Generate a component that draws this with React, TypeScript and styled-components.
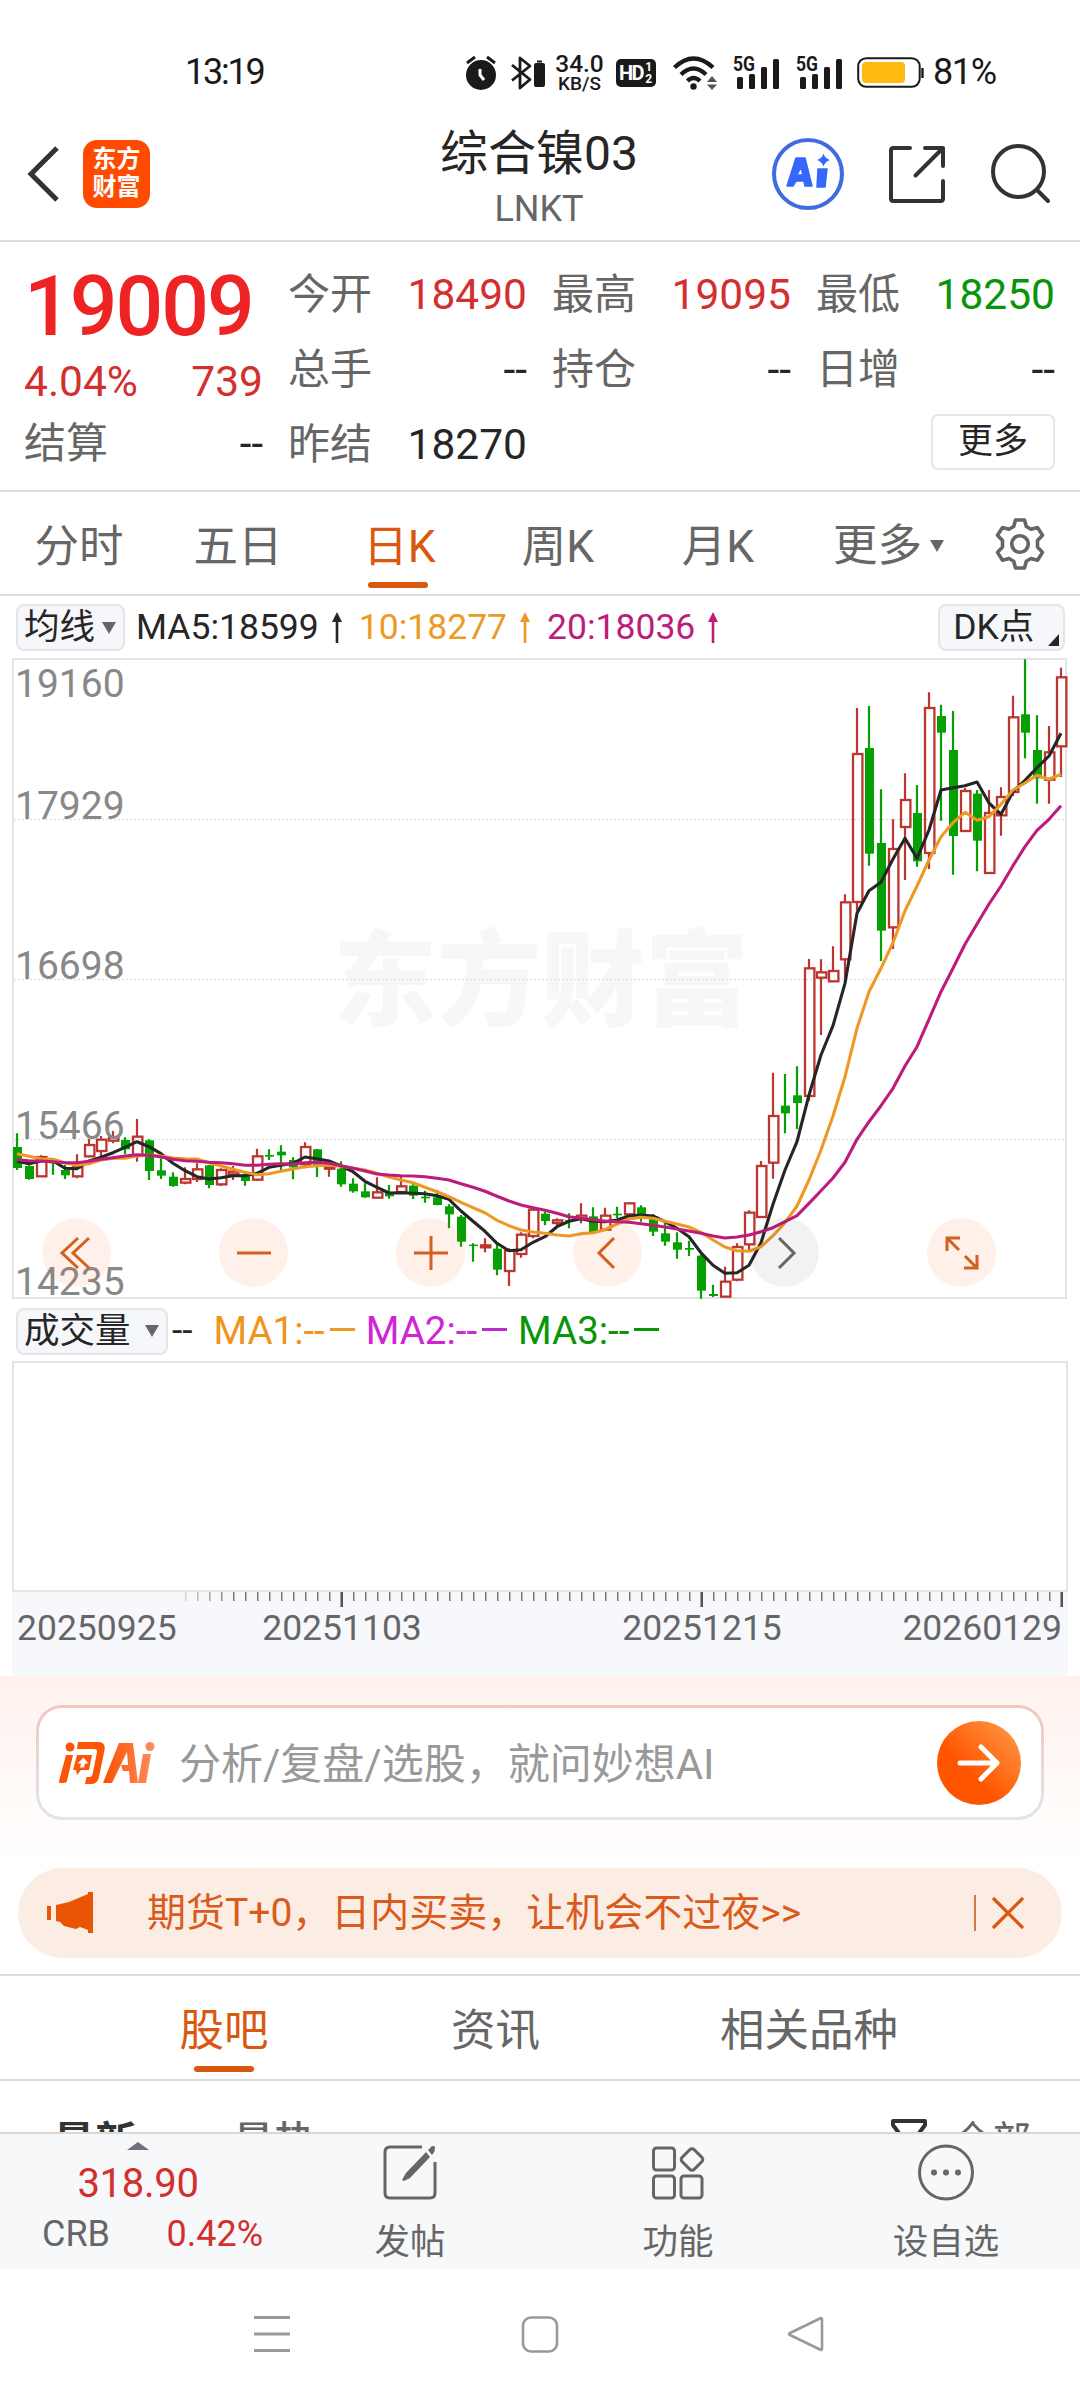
import React from "react";
import styled, { createGlobalStyle } from "styled-components";

const ORANGE = "#d9580f";
const RED = "#d32f2f";
const GREEN = "#0a940a";
const GRAY = "#666";
const INK = "#262626";
const LINE = "#dcdcdc";

const Global = createGlobalStyle`
  body { margin: 0; background: #fff; }
  * { box-sizing: border-box; }
  svg { display: block; flex: none; }
`;

const Screen = styled.div`
  width: 1080px;
  height: 2400px;
  overflow: hidden;
  display: flex;
  flex-direction: column;
  background: #fff;
  font-family: Roboto, "Noto Sans CJK SC", sans-serif;
  color: ${INK};
`;

const Text = styled.span<{ $size: number; $color?: string; $weight?: number }>`
  font-size: ${(p) => p.$size}px;
  line-height: ${(p) => Math.round(p.$size * 1.2)}px;
  color: ${(p) => p.$color || INK};
  font-weight: ${(p) => p.$weight || 400};
  white-space: nowrap;
`;

/* ---------- status bar ---------- */
const StatusBar = styled.div`
  height: 108px;
  flex: none;
  padding: 37px 0 0 185px;
  display: flex;
  align-items: center;
`;
const Clock = styled(Text)`
  width: 280px;
  letter-spacing: -2.2px;
`;
const Percent = styled(Text)`
  letter-spacing: -1.4px;
`;
const StatusIcons = styled.div`
  display: flex;
  align-items: center;
`;
const Speed = styled.div`
  width: 49px;
  margin-left: 9px;
  display: flex;
  flex-direction: column;
  align-items: center;
  font-weight: 500;
  color: #1a1a1a;
`;
const SpeedNum = styled.span`
  font-size: 24.5px;
  line-height: 23px;
`;
const SpeedUnit = styled.span`
  font-size: 19px;
  line-height: 18px;
`;
const HdBadge = styled.div`
  width: 40px;
  height: 28px;
  margin-left: 12px;
  border-radius: 5px;
  background: #1a1a1a;
  color: #fff;
  display: flex;
  align-items: center;
  padding-left: 3px;
  font-size: 20px;
  font-weight: 700;
  letter-spacing: -1.5px;
`;
const HdDigits = styled.span`
  display: flex;
  flex-direction: column;
  font-size: 12px;
  line-height: 12px;
  margin-left: 2px;
`;
const Signal = styled.svg`
  margin-left: 15px;
`;

/* ---------- header ---------- */
const Header = styled.header`
  height: 134px;
  flex: none;
  border-bottom: 2px solid ${LINE};
  display: grid;
  grid-template-columns: 1fr 260px 1fr;
`;
const HeaderLeft = styled.div`
  display: flex;
  align-items: center;
  padding-left: 26px;
`;
const AppLogo = styled.div`
  width: 67px;
  height: 68px;
  margin-left: 23px;
  border-radius: 14px;
  background: #ff4a00;
  color: #fff;
  font-weight: 700;
  font-size: 24px;
  line-height: 28px;
  display: flex;
  flex-direction: column;
  align-items: center;
  justify-content: center;
  padding-bottom: 2px;
`;
const HeaderTitle = styled.div`
  display: flex;
  flex-direction: column;
  align-items: center;
  padding: 17px 2px 0 0;
`;
const Ticker = styled(Text)`
  margin-top: 5px;
`;
const HeaderRight = styled.div`
  display: flex;
  align-items: center;
  justify-content: flex-end;
  padding-right: 28px;
`;

/* ---------- quote ---------- */
const Quote = styled.section`
  height: 250px;
  flex: none;
  border-bottom: 2px solid ${LINE};
  padding: 15px 24px 0;
  display: grid;
  grid-template-columns: repeat(4, 239px);
  column-gap: 25px;
`;
const QuoteCol = styled.div`
  display: flex;
  flex-direction: column;
`;
const Pair = styled.div<{ $h?: number }>`
  height: ${(p) => p.$h || 75}px;
  display: flex;
  justify-content: space-between;
  align-items: center;
`;
const Price = styled.div`
  height: 100px;
  padding: 0;
  font-size: 84px;
  line-height: 100px;
  font-weight: 500;
  letter-spacing: -2px;
  color: #ee2424;
`;
const MoreButton = styled.button`
  width: 124px;
  height: 56px;
  margin: 7px 0 0 auto;
  padding: 0;
  border: 2px solid #e6e6e6;
  border-radius: 7px;
  background: #fff;
  font: 400 35px/50px Roboto, "Noto Sans CJK SC", sans-serif;
  color: ${INK};
`;

/* ---------- period tabs ---------- */
const PeriodTabs = styled.nav`
  height: 104px;
  flex: none;
  border-bottom: 2px solid ${LINE};
  display: flex;
`;
const Tab = styled.div<{ $active?: boolean; $w: number }>`
  width: ${(p) => p.$w}px;
  display: flex;
  flex-direction: column;
  align-items: center;
  padding-top: 27px;
  font-size: 44.5px;
  line-height: 56px;
  white-space: nowrap;
  color: ${(p) => (p.$active ? ORANGE : GRAY)};
`;
const TabLine = styled.i`
  width: 60px;
  height: 6px;
  border-radius: 3px;
  margin: 7px 4px 0 0;
  background: ${ORANGE};
`;
const CommunityTab = styled(Tab)`
  ${TabLine} {
    margin-right: 0;
  }
`;
const MoreTab = styled.div`
  width: 193px;
  padding: 0 0 0 32px;
  display: flex;
  align-items: center;
  gap: 8px;
  height: 108px;
`;

/* ---------- indicator rows ---------- */
const Row = styled.div<{ $h: number }>`
  height: ${(p) => p.$h}px;
  flex: none;
  display: flex;
  align-items: center;
  padding: 1px 15px 0 16px;
`;
const Chip = styled.div<{ $w: number; $pr?: number }>`
  width: ${(p) => p.$w}px;
  height: 47px;
  flex: none;
  padding: 0 ${(p) => p.$pr ?? 7}px 0 6px;
  border: 2px solid #e3e5e8;
  border-radius: 8px;
  background: #f6f7fa;
  display: flex;
  align-items: center;
  justify-content: space-between;
`;
const Ma = styled.div<{ $ml: number }>`
  display: flex;
  align-items: center;
  margin-left: ${(p) => p.$ml}px;
`;
const Arrow = styled.svg`
  margin-left: 12px;
`;
const Spacer = styled.div`
  flex: 1;
`;
const Dash = styled.i<{ $color: string }>`
  width: 25px;
  height: 3px;
  margin: 0 0 3px 5px;
  background: ${(p) => p.$color};
`;

/* ---------- chart ---------- */
const ChartArea = styled.div`
  position: relative;
  height: 642px;
  flex: none;
`;
const ChartTools = styled.div`
  position: absolute;
  left: 42px;
  top: 560px;
  display: flex;
  gap: 109px;
`;
const Tool = styled.button<{ $muted?: boolean }>`
  width: 69px;
  height: 69px;
  margin-right: -1px;
  padding: 0;
  border: 0;
  border-radius: 50%;
  display: grid;
  place-items: center;
  background: ${(p) => (p.$muted ? "rgba(0,0,0,.05)" : "rgba(255,96,20,.09)")};
`;
const VolumeBox = styled.div`
  height: 231px;
  flex: none;
  margin: 0 12px;
  border: 2px solid #e4e4e4;
`;
const AxisBox = styled.div`
  height: 84px;
  flex: none;
  margin: 0 12px;
  background: #f7f8fb;
`;

/* ---------- AI question ---------- */
const AskPanel = styled.section`
  height: 192px;
  flex: none;
  padding: 29px 36px 0;
  background: linear-gradient(#fff2ee, #fffaf8 60%, #fff);
`;
const AskBox = styled.div`
  height: 115px;
  border-radius: 26px;
  border: 3px solid transparent;
  background: linear-gradient(#fff, #fff) padding-box,
    linear-gradient(#f1c8c0, #dfe6ef) border-box;
  display: flex;
  align-items: center;
  padding: 0 20px;
`;
const Placeholder = styled(Text)`
  flex: 1;
  margin-left: 23px;
  padding-top: 5px;
`;
const SendButton = styled.button`
  width: 84px;
  height: 84px;
  padding: 0;
  border: 0;
  border-radius: 50%;
  background: linear-gradient(225deg, #ff9340 10%, #ff5500 62%);
  display: grid;
  place-items: center;
`;

/* ---------- notice ---------- */
const Notice = styled.div`
  height: 90px;
  flex: none;
  margin: 0 18px 16px;
  padding: 0 37px 0 29px;
  border-radius: 45px;
  background: #fcede4;
  display: flex;
  align-items: center;
`;
const NoticeText = styled(Text)`
  flex: 1;
  margin-left: 53px;
`;
const Divider = styled.i`
  width: 2px;
  height: 36px;
  margin-right: 15px;
  background: #cf7a4a;
`;

/* ---------- community ---------- */
const CommunityTabs = styled.nav`
  height: 107px;
  flex: none;
  border-top: 2px solid ${LINE};
  border-bottom: 2px solid ${LINE};
  padding-left: 88px;
  display: flex;
`;
const Feed = styled.div`
  height: 51px;
  flex: none;
  overflow: hidden;
  display: flex;
  padding: 37px 49px 0 53px;
`;
const FeedItem = styled(Text)<{ $ml?: number }>`
  margin-left: ${(p) => p.$ml || 0}px;
`;

/* ---------- bottom ---------- */
const BottomBar = styled.footer`
  height: 137px;
  flex: none;
  border-top: 2px solid #d8d8d8;
  background: #f7f8fa;
  display: grid;
  grid-template-columns: 276px 268px 268px 268px;
`;
const IndexCell = styled.div`
  display: flex;
  flex-direction: column;
  align-items: center;
  padding-top: 8px;
`;
const IndexValue = styled(Text)`
  margin-top: 10px;
  letter-spacing: -0.3px;
`;
const IndexRow = styled.div`
  width: 276px;
  padding: 5px 13px 0 42px;
  display: flex;
  justify-content: space-between;
`;
const Action = styled.div`
  display: flex;
  flex-direction: column;
  align-items: center;
  padding-top: 9px;
  gap: 20px;
`;
const SystemNav = styled.div`
  height: 132px;
  flex: none;
  display: flex;
  align-items: center;
  padding: 0 0 2px 252px;
  gap: 227px;
`;

/* ---------- data ---------- */
type Candle = ["r" | "g", number, number, number, number];

// [colour, high, body top, body bottom, low], one third of a pixel each
const calm: Candle[] = [
  ["g", 160, 201, 264, 270], ["g", 256, 258, 297, 299], ["r", 226, 231, 289, 290], ["g", 236, 244, 250, 284],
  ["g", 255, 270, 286, 297], ["r", 223, 262, 289, 295], ["r", 176, 195, 229, 232], ["r", 168, 179, 213, 228],
  ["r", 153, 172, 182, 190], ["g", 172, 180, 208, 222], ["r", 117, 170, 226, 245], ["g", 178, 181, 273, 300],
  ["g", 235, 271, 287, 297], ["g", 277, 290, 318, 320], ["r", 262, 297, 308, 313], ["r", 250, 268, 297, 306],
  ["g", 255, 256, 315, 325], ["r", 265, 270, 313, 318], ["r", 258, 275, 283, 300], ["g", 275, 283, 303, 317],
  ["r", 206, 229, 299, 302], ["g", 208, 225, 230, 240], ["g", 196, 215, 226, 272], ["g", 232, 240, 262, 298],
  ["r", 187, 201, 253, 265], ["g", 207, 208, 255, 291], ["r", 255, 262, 266, 290], ["g", 244, 266, 313, 320],
  ["g", 295, 311, 334, 338], ["g", 310, 334, 352, 353], ["r", 292, 337, 353, 355], ["g", 315, 338, 349, 356],
  ["r", 290, 319, 336, 340], ["g", 313, 317, 347, 357], ["g", 332, 350, 355, 368], ["g", 330, 352, 375, 376],
  ["g", 373, 379, 403, 445], ["g", 405, 410, 485, 500], ["g", 490, 494, 498, 545], ["r", 475, 496, 502, 517],
  ["g", 490, 506, 569, 586], ["r", 505, 512, 573, 618], ["r", 457, 464, 522, 533], ["r", 388, 389, 468, 475],
  ["g", 395, 401, 423, 436], ["r", 415, 421, 429, 438], ["g", 400, 420, 425, 445], ["r", 370, 407, 416, 430],
  ["g", 382, 409, 457, 460], ["r", 383, 407, 449, 452], ["g", 380, 401, 406, 415], ["r", 368, 370, 403, 404],
  ["g", 376, 382, 403, 425], ["g", 402, 410, 455, 468], ["g", 430, 460, 485, 497], ["g", 457, 487, 509, 536],
  ["g", 482, 504, 509, 528], ["g", 522, 527, 632, 656], ["g", 614, 642, 648, 651], ["r", 560, 605, 650, 652],
  ["r", 490, 501, 599, 604], ["r", 391, 398, 493, 510], ["r", 243, 258, 411, 413], ["r", -22, 108, 248, 296],
  ["g", -18, 77, 100, 160], ["g", -41, 46, 69, 147],
];
const rally: Candle[] = [
  ["r", 927, 955, 1338, 1352], ["r", 928, 967, 983, 1155], ["r", 889, 963, 994, 995], ["r", 733, 757, 928, 985],
  ["r", 174, 312, 756, 782], ["g", 168, 294, 611, 647], ["g", 418, 579, 842, 933], ["r", 508, 597, 832, 897],
  ["r", 370, 450, 531, 690], ["g", 405, 489, 634, 650], ["r", 127, 174, 609, 657], ["g", 164, 198, 248, 512],
  ["g", 183, 300, 558, 674], ["r", 414, 423, 543, 546], ["g", 420, 431, 572, 664], ["r", 420, 489, 669, 669],
  ["r", 412, 441, 496, 557], ["r", 137, 202, 426, 438], ["g", 28, 193, 248, 325], ["g", 196, 300, 385, 461],
  ["r", 228, 307, 389, 461], ["r", 53, 82, 289, 381],
];
const CALM_BASE = 1266;
const RALLY_BASE = -24;
const px = (i: number) => 17 + 12 * i;

const ma5a = [244, 251, 243, 243, 265, 266, 243, 232, 218, 202, 185, 200, 221, 250, 272, 290, 297, 293, 287, 287, 280, 262, 256, 250, 231, 236, 243, 258, 275, 304, 322, 339, 338, 340, 341, 347, 358, 393, 424, 454, 490, 512, 509, 487, 470, 440, 424, 416, 424, 425, 420, 408, 405, 408, 425, 445, 470, 518, 556, 580, 578, 556, 488, 373, 270, 185];
const ma5b = [1335, 1215, 1127, 1000, 790, 722, 697, 627, 565, 625, 540, 420, 413, 407, 396, 459, 493, 425, 391, 353, 318, 250];
const ma10a = [221, 229, 236, 238, 248, 256, 251, 240, 235, 235, 228, 225, 228, 234, 236, 237, 248, 258, 268, 277, 284, 281, 274, 267, 260, 257, 256, 259, 264, 270, 280, 291, 300, 308, 322, 335, 350, 367, 383, 398, 421, 437, 450, 456, 460, 465, 468, 461, 458, 449, 432, 417, 412, 415, 424, 432, 441, 457, 480, 501, 512, 514, 500, 467, 428, 378, 300, 210, 108, -10];
const ma10b = [1135, 1025, 955, 878, 782, 708, 630, 560, 518, 487, 511, 500, 463, 420, 399, 376, 388, 373];
const ma20a = [239, 242, 243, 245, 248, 248, 244, 238, 233, 228, 224, 226, 231, 238, 242, 244, 247, 248, 251, 256, 256, 253, 251, 252, 248, 247, 250, 257, 265, 273, 282, 285, 287, 288, 290, 295, 300, 311, 322, 334, 349, 363, 375, 383, 391, 400, 410, 415, 419, 423, 425, 427, 431, 436, 441, 447, 453, 460, 468, 474, 471, 465, 455, 443, 425, 407, 370, 332, 294, 247, 178, 125, 77];
const ma20b = [1315, 1248, 1190, 1108, 1025, 955, 883, 822, 762, 708, 647, 590, 541, 508, 467];

const line = (a: number[], b: number[]) =>
  [...a.map((v) => v + CALM_BASE), ...b.map((v) => v + RALLY_BASE)]
    .map((v, i) => `${px(i)},${(v / 3).toFixed(1)}`)
    .join(" ");

const candles = [
  ...calm.map((c) => ({ c, base: CALM_BASE })),
  ...rally.map((c) => ({ c, base: RALLY_BASE })),
].map(({ c, base }) => ({
  up: c[0] === "r",
  high: (c[1] + base) / 3,
  top: (c[2] + base) / 3,
  bottom: (c[3] + base) / 3,
  low: (c[4] + base) / 3,
}));

const Candles = () => (
  <g>
    {candles.map((k, i) => {
      const x = px(i);
      const color = k.up ? "#bb3531" : "#04a004";
      return (
        <g key={i}>
          <path d={`M${x} ${k.high}V${k.up ? k.top : k.low}M${x} ${k.bottom}V${k.low}`} stroke={color} strokeWidth="2.2" />
          {k.up ? (
            <rect x={x - 4} y={k.top} width="9.4" height={Math.max(k.bottom - k.top, 1)} fill="none" stroke={color} strokeWidth="2.3" />
          ) : (
            <rect x={x - 4} y={k.top} width="9" height={k.bottom - k.top} fill={color} />
          )}
        </g>
      );
    })}
  </g>
);

const levels = [
  { label: "19160", y: 39 },
  { label: "17929", y: 161, grid: true },
  { label: "16698", y: 321, grid: true },
  { label: "15466", y: 481, grid: true },
  { label: "14235", y: 637 },
];

const Chart = () => (
  <svg width="1080" height="642">
    <rect x="13" y="1" width="1053" height="639" fill="none" stroke="#e4e4e4" strokeWidth="2" />
    <text x="541" y="360" textAnchor="middle" fontSize="104" fontWeight="900" fill="#f7f7f7">东方财富</text>
    {levels.map((l) => l.grid && (
      <path key={l.label} d={`M14 ${l.y}.5H1066`} stroke="#e2e2e2" strokeWidth="1.4" strokeDasharray="2 2" />
    ))}
    <Candles />
    <g fill="none" strokeWidth="3.1" strokeLinejoin="round">
      <polyline points={line(ma5a, ma5b)} stroke="#262626" />
      <polyline points={line(ma10a, ma10b)} stroke="#ec9a25" />
      <polyline points={line(ma20a, ma20b)} stroke="#bd1c7b" />
    </g>
    {levels.map((l) => (
      <text key={l.label} x="15" y={l.y} fontSize="39" fill="#888">{l.label}</text>
    ))}
  </svg>
);

const dates = [
  { t: "20250925", x: 5, a: "start" as const },
  { t: "20251103", x: 330, a: "middle" as const },
  { t: "20251215", x: 690, a: "middle" as const },
  { t: "20260129", x: 1050, a: "end" as const },
];
const TimeAxis = () => (
  <svg width="1056" height="84">
    {Array.from({ length: 74 }, (_, k) => k + 14).map((i) => {
      const major = i === 27 || i === 57 || i === 87;
      return (
        <rect key={i} x={px(i) - 12 - (major ? 0.5 : 0)} y="0" width={major ? 2.5 : 1.5} height={major ? 15 : 9} fill={major ? "#555" : "#777"} opacity={i < 18 ? 0.3 + (i - 14) * 0.17 : 1} />
      );
    })}
    {dates.map((d) => (
      <text key={d.t} x={d.x} y="48" fontSize="35.5" fill="#666" textAnchor={d.a}>{d.t}</text>
    ))}
  </svg>
);

/* ---------- icons ---------- */
const AlarmIcon = () => (
  <svg width="32" height="36" viewBox="0 0 32 36">
    <circle cx="16" cy="20" r="15" fill="#1a1a1a" />
    <path d="M2 8l8-6M30 8l-8-6" stroke="#1a1a1a" strokeWidth="3" />
    <path d="M15 14v6l4 5" stroke="#fff" strokeWidth="3" fill="none" />
  </svg>
);
const BluetoothIcon = () => (
  <svg width="36" height="36" viewBox="0 0 36 36" style={{ marginLeft: 13 }}>
    <path d="M2 10l18 14.500-10 8.500V3l10 8L2 25.500" fill="none" stroke="#1a1a1a" strokeWidth="2.8" strokeLinejoin="round" />
    <rect x="24" y="8" width="11" height="24" rx="2" fill="#1a1a1a" />
    <rect x="27" y="5.500" width="5" height="2" fill="#1a1a1a" />
  </svg>
);
const WifiIcon = () => (
  <svg width="45" height="34" viewBox="0 0 45 34" style={{ marginLeft: 17 }}>
    <g fill="none" stroke="#1a1a1a" strokeWidth="4.4">
      <path d="M1.500 11.500Q20.500-6.500 40 11.500" />
      <path d="M8 18.500Q20.500 6.500 33 18.500" />
      <path d="M14.500 25Q20.500 19 27 25" />
    </g>
    <circle cx="20.500" cy="30.500" r="3.200" fill="#1a1a1a" />
    <path d="M34 26l5-6 5 6zM34 28.500l5 5.500 5-5.500z" fill="#555" />
  </svg>
);
const SignalIcon = () => (
  <Signal width="48" height="36" viewBox="0 0 48 36">
    <text x="0" y="16" fontSize="19.500" fontWeight="700" fill="#1a1a1a" textLength="22" lengthAdjust="spacingAndGlyphs">5G</text>
    <g fill="#1a1a1a">
      <rect x="4" y="22" width="6" height="12" rx="1.500" />
      <rect x="16" y="19" width="6" height="15" rx="1.500" />
      <rect x="28" y="12" width="6" height="22" rx="1.500" />
      <rect x="40" y="4" width="6" height="30" rx="1.500" />
    </g>
  </Signal>
);
const BatteryIcon = () => (
  <svg width="68" height="32" viewBox="0 0 68 32" style={{ marginLeft: 13, marginRight: 8 }}>
    <rect x="1.200" y="1.200" width="61.500" height="28.600" rx="8" fill="none" stroke="#1a1a1a" strokeWidth="2" />
    <rect x="5" y="5" width="43" height="21" rx="4" fill="#ffb911" />
    <path d="M65.500 11v10" stroke="#1a1a1a" strokeWidth="2.400" />
  </svg>
);
const BackIcon = () => (
  <svg width="34" height="58" viewBox="0 0 34 58">
    <path d="M31 3L5 29l26 26" fill="none" stroke="#333" strokeWidth="5" />
  </svg>
);
const AiIcon = () => (
  <svg width="74" height="74" viewBox="0 0 74 74">
    <circle cx="37" cy="37" r="34" fill="none" stroke="#4169e1" strokeWidth="4" />
    <path fillRule="evenodd" fill="#3467fb" stroke="#3467fb" strokeWidth="1.500" strokeLinejoin="round" d="M25 21h9l7 28h-7l-1-5h-8l-3 5h-6zM30 30l-4 8h6z" />
    <path d="M47 32h9l-2 18h-8z" fill="#3467fb" stroke="#3467fb" strokeWidth="1.500" strokeLinejoin="round" />
    <path d="M52.500 16.500q1.500 5 6.500 6.500-5 1.500-6.500 6.500-1.500-5-6.500-6.500 5-1.500 6.500-6.500z" fill="#3467fb" />
  </svg>
);
const ShareIcon = () => (
  <svg width="60" height="60" viewBox="0 0 60 60" style={{ marginLeft: 42 }}>
    <path d="M23 4H6.500Q4 4 4 6.500V54.500Q4 57 6.500 57H53.500Q56 57 56 54.500V37M38 4H56V22M56 4L28.500 31.500" fill="none" stroke="#333" strokeWidth="4" strokeLinecap="round" strokeLinejoin="round" />
  </svg>
);
const SearchIcon = () => (
  <svg width="62" height="62" viewBox="0 0 62 62" style={{ marginLeft: 43 }}>
    <circle cx="28.500" cy="28.500" r="25.500" fill="none" stroke="#333" strokeWidth="4" />
    <path d="M47 47l11 11" stroke="#333" strokeWidth="4" strokeLinecap="round" />
  </svg>
);
const GearIcon = () => (
  <svg width="54" height="54" viewBox="0 0 54 54" style={{ marginTop: 25, marginLeft: -1 }}>
    <path d="M22.500 3h9l1.800 6.500 4.700 2.700 6.500-1.700 5 7.800-5 5.200v6.500l5 5.400-5 7.800-6.500-1.700-4.700 2.700L31.500 51h-9l-1.800-6.800-4.700-2.700-6.500 1.700-5-7.800 5-5.400v-6.500l-5-5.200 5-7.800 6.500 1.700 4.700-2.700z" fill="none" stroke="#666" strokeWidth="3.600" strokeLinejoin="round" />
    <circle cx="27" cy="27" r="8.300" fill="none" stroke="#666" strokeWidth="3.600" />
  </svg>
);
const Caret = ({ size = 14, color = "#666" }: { size?: number; color?: string }) => (
  <svg width={size} height="12" viewBox="0 0 14 12" preserveAspectRatio="none">
    <path d="M0 0h14L7 12z" fill={color} />
  </svg>
);
const UpArrow = ({ color }: { color: string }) => (
  <Arrow width="12" height="32" viewBox="0 0 12 32">
    <path d="M6 31V8" stroke={color} strokeWidth="2.600" />
    <path d="M1 10l5-10 5 10z" fill={color} />
  </Arrow>
);
const ToolIcon = ({ d, color = "#d4601f" }: { d: string; color?: string }) => (
  <svg width="40" height="40" viewBox="-20 -20 40 40">
    <path d={d} fill="none" stroke={color} strokeWidth="3" />
  </svg>
);
const AskLogo = () => (
  <svg width="97" height="46" viewBox="0 0 97 46">
    <defs>
      <linearGradient id="ask" gradientUnits="userSpaceOnUse" x1="0" y1="0" x2="97" y2="0">
        <stop offset="0.500" stopColor="#fb5607" />
        <stop offset="1" stopColor="#ff8f60" />
      </linearGradient>
    </defs>
    <g fill="url(#ask)">
      <path d="M7 15h7L8 41q-1 2-3 2H1q-1 0-1-2z" />
      <circle cx="11" cy="7" r="4.500" />
      <path d="M19 2h20q8 0 6.500 8L40 37q-1.500 7-8 7h-6l1.500-7h3q2.500 0 3-2.500L38 12q.5-3-2.500-3H18z" />
      <path fillRule="evenodd" d="M18 15h15l-3 15h-8l-4 5-1-5h-3zM24.500 17.500l-6 6h3.500l-1 4h4l1-4h3.500z" />
      <path d="M60 3h14l5 40h-8l-1-12h-6l-2-6h7l-1-13-15 31h-9z" />
      <path d="M84 14h8l-5 29h-8z" />
      <circle cx="91" cy="6.500" r="4.500" />
    </g>
  </svg>
);
const MegaphoneIcon = () => (
  <svg width="47" height="42" viewBox="0 0 47 42">
    <path d="M0 14h4v14H0zM9 13l13-3 19-8V0h5v41h-5v-3l-8-3-4 2-12-3-4-4-4-1z" fill="#ea5504" />
  </svg>
);
const CloseIcon = () => (
  <svg width="34" height="34" viewBox="0 0 34 34">
    <path d="M2 2l30 30M32 2L2 32" stroke={ORANGE} strokeWidth="3.200" />
  </svg>
);
const FilterIcon = () => (
  <svg width="40" height="40" viewBox="0 0 40 40">
    <path d="M4 3h32v4L25 22v14l-10-6v-8L4 7z" fill="none" stroke="#333" strokeWidth="4" strokeLinejoin="round" />
  </svg>
);
const PostIcon = () => (
  <svg width="56" height="58" viewBox="0 0 56 58">
    <path d="M40 4H8Q3 4 3 9V50Q3 55 8 55H48Q53 55 53 50V19" fill="none" stroke="#666" strokeWidth="3" />
    <path d="M22 38l-2-1 4-7 20-21 4 5-20 21zM46 7l4-4 3 .5-.5 5-2.500 3.500z" fill="#666" />
  </svg>
);
const GridIcon = () => (
  <svg width="56" height="58" viewBox="0 0 56 58">
    <g fill="none" stroke="#666" strokeWidth="3">
      <rect x="3.500" y="5" width="21" height="22" rx="3" />
      <rect x="3.500" y="33" width="21" height="22" rx="3" />
      <rect x="31" y="33" width="21" height="22" rx="3" />
      <rect x="-8.500" y="-8.500" width="17" height="17" rx="3" transform="translate(42 16.500) rotate(45)" />
    </g>
  </svg>
);
const DotsIcon = () => (
  <svg width="58" height="58" viewBox="0 0 58 58">
    <circle cx="29" cy="29.500" r="26.500" fill="none" stroke="#666" strokeWidth="3" />
    <g fill="#666"><circle cx="17" cy="29.500" r="3" /><circle cx="29" cy="29.500" r="3" /><circle cx="41" cy="29.500" r="3" /></g>
  </svg>
);

const stats = [
  [["今开", "18490", RED], ["总手", "--", INK], ["昨结", "18270", INK]],
  [["最高", "19095", RED], ["持仓", "--", INK]],
  [["最低", "18250", GREEN], ["日增", "--", INK]],
];

export default function App() {
  return (
    <Screen>
      <Global />
      <StatusBar>
        <Clock $size={36} $color="#1a1a1a">13:19</Clock>
        <StatusIcons>
          <AlarmIcon />
          <BluetoothIcon />
          <Speed><SpeedNum>34.0</SpeedNum><SpeedUnit>KB/S</SpeedUnit></Speed>
          <HdBadge>HD<HdDigits><span>1</span><span>2</span></HdDigits></HdBadge>
          <WifiIcon />
          <SignalIcon />
          <SignalIcon />
          <BatteryIcon />
          <Percent $size={36} $color="#1a1a1a">81%</Percent>
        </StatusIcons>
      </StatusBar>

      <Header>
        <HeaderLeft>
          <BackIcon />
          <AppLogo><span>东方</span><span>财富</span></AppLogo>
        </HeaderLeft>
        <HeaderTitle>
          <Text $size={48}>综合镍03</Text>
          <Ticker $size={36} $color={GRAY}>LNKT</Ticker>
        </HeaderTitle>
        <HeaderRight>
          <AiIcon />
          <ShareIcon />
          <SearchIcon />
        </HeaderRight>
      </Header>

      <Quote>
        <QuoteCol>
          <Price>19009</Price>
          <Pair $h={49}>
            <Text $size={42.5} $color={RED}>4.04%</Text>
            <Text $size={42.5} $color={RED}>739</Text>
          </Pair>
          <Pair>
            <Text $size={42} $color={GRAY}>结算</Text>
            <Text $size={42}>--</Text>
          </Pair>
        </QuoteCol>
        {stats.map((col, i) => (
          <QuoteCol key={i}>
            {col.map(([k, v, c]) => (
              <Pair key={k}>
                <Text $size={42} $color={GRAY}>{k}</Text>
                <Text $size={42.5} $color={c}>{v}</Text>
              </Pair>
            ))}
            {i === 2 && <MoreButton>更多</MoreButton>}
          </QuoteCol>
        ))}
      </Quote>

      <PeriodTabs>
        <Tab $w={158}>分时</Tab>
        <Tab $w={160}>五日</Tab>
        <Tab $w={163} $active>日K<TabLine /></Tab>
        <Tab $w={154}>周K</Tab>
        <Tab $w={166}>月K</Tab>
        <MoreTab><Text $size={44.5} $color={GRAY}>更多</Text><Caret /></MoreTab>
        <GearIcon />
      </PeriodTabs>

      <Row $h={62}>
        <Chip $w={109}><Text $size={35.5}>均线</Text><Caret /></Chip>
        <Ma $ml={11}><Text $size={35.5}>MA5:18599</Text><UpArrow color={INK} /></Ma>
        <Ma $ml={16}><Text $size={35.5} $color="#ec9a25">10:18277</Text><UpArrow color="#ec9a25" /></Ma>
        <Ma $ml={16}><Text $size={35.5} $color="#bd1c7b">20:18036</Text><UpArrow color="#bd1c7b" /></Ma>
        <Spacer />
        <Chip $w={127} $pr={4}>
          <Text $size={35.5}>&thinsp;DK点</Text>
          <svg width="11" height="38"><path d="M11 25v12H0z" fill={INK} /></svg>
        </Chip>
      </Row>

      <ChartArea>
        <Chart />
        <ChartTools>
          <Tool><ToolIcon d="M1-15L-15 0 1 15M12-15L-4 0 12 15" /></Tool>
          <Tool><ToolIcon d="M-17 0H17" /></Tool>
          <Tool><ToolIcon d="M-17 0H17M0-17V17" /></Tool>
          <Tool><ToolIcon d="M6-15L-9 0 6 15" /></Tool>
          <Tool $muted><ToolIcon d="M-6-15L9 0-6 15" color="#666" /></Tool>
          <Tool><ToolIcon d="M-2-15H-15V-2M-15-15L-3-3M2 15H15V2M15 15L3 3" /></Tool>
        </ChartTools>
      </ChartArea>

      <Row $h={61}>
        <Chip $w={152}><Text $size={35.5}>成交量</Text><Caret /></Chip>
        <Ma $ml={4}><Text $size={37}>--</Text></Ma>
        <Ma $ml={21}><Text $size={38.5} $color="#f0951c">MA1:--</Text><Dash $color="#ec9a25" /></Ma>
        <Ma $ml={11}><Text $size={38.5} $color="#cf25d6">MA2:--</Text><Dash $color="#bd2bc9" /></Ma>
        <Ma $ml={11}><Text $size={38.5} $color={GREEN}>MA3:--</Text><Dash $color={GREEN} /></Ma>
      </Row>
      <VolumeBox />
      <AxisBox><TimeAxis /></AxisBox>

      <AskPanel>
        <AskBox>
          <AskLogo />
          <Placeholder $size={42} $color="#999">分析/复盘/选股，就问妙想AI</Placeholder>
          <SendButton>
            <svg width="44" height="40" viewBox="0 0 44 40">
              <path d="M3 20H40M24 4L40 20 24 36" fill="none" stroke="#fff" strokeWidth="5" strokeLinecap="round" strokeLinejoin="round" />
            </svg>
          </SendButton>
        </AskBox>
      </AskPanel>

      <Notice>
        <MegaphoneIcon />
        <NoticeText $size={39} $color="#d95b1c">期货T+0，日内买卖，让机会不过夜&gt;&gt;</NoticeText>
        <Divider />
        <CloseIcon />
      </Notice>

      <CommunityTabs>
        <CommunityTab $w={272} $active>股吧<TabLine /></CommunityTab>
        <CommunityTab $w={271}>资讯</CommunityTab>
        <CommunityTab $w={356}>相关品种</CommunityTab>
      </CommunityTabs>

      <Feed>
        <FeedItem $size={42} $weight={700} $color="#333">最新</FeedItem>
        <FeedItem $size={41} $color={GRAY} $ml={96} $weight={500}>最热</FeedItem>
        <Spacer />
        <FilterIcon />
        <FeedItem $size={39} $color={GRAY} $ml={24}>全部</FeedItem>
      </Feed>

      <BottomBar>
        <IndexCell>
          <svg width="22" height="8"><path d="M0 8L11 0l11 8z" fill="#70707a" /></svg>
          <IndexValue $size={40} $color={RED}>318.90</IndexValue>
          <IndexRow>
            <Text $size={36} $color={GRAY}>CRB</Text>
            <Text $size={36} $color={RED}>0.42%</Text>
          </IndexRow>
        </IndexCell>
        <Action><PostIcon /><Text $size={35.5} $color={GRAY}>发帖</Text></Action>
        <Action><GridIcon /><Text $size={35.5} $color={GRAY}>功能</Text></Action>
        <Action><DotsIcon /><Text $size={35.5} $color={GRAY}>设自选</Text></Action>
      </BottomBar>

      <SystemNav>
        <svg width="40" height="40"><path d="M2 3.500H38M2 20H38M2 36.500H38" stroke="#999" strokeWidth="3" /></svg>
        <svg width="40" height="40"><rect x="4" y="3.500" width="34" height="34" rx="8" fill="none" stroke="#999" strokeWidth="2.600" /></svg>
        <svg width="40" height="40"><path d="M34 4.500q2-1 2 1v29q0 2-2 1L4 21q-2-1 0-2z" fill="none" stroke="#999" strokeWidth="2.600" strokeLinejoin="round" /></svg>
      </SystemNav>
    </Screen>
  );
}
